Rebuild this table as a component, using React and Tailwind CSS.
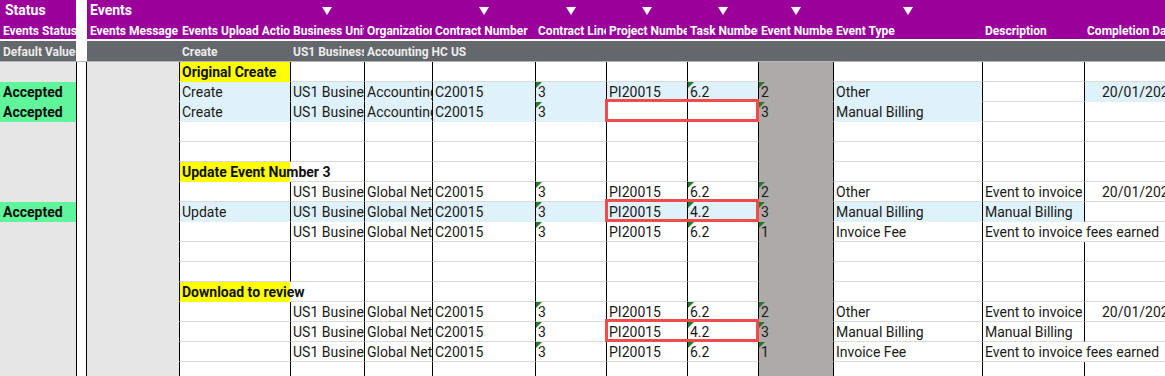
import React from 'react';

const COLS = [
  { key: 'act', w: 'w-[111px]', head: 'Events Upload Action' },
  { key: 'bu', w: 'w-[74px]', head: 'Business Unit', tri: true },
  { key: 'org', w: 'w-[68px]', head: 'Organization' },
  { key: 'cn', w: 'w-[103px]', head: 'Contract Number', tri: true },
  { key: 'cl', w: 'w-[71px]', head: 'Contract Line', tri: true, flag: true },
  { key: 'pn', w: 'w-[81px]', head: 'Project Number', tri: true },
  { key: 'tn', w: 'w-[71px]', head: 'Task Number', tri: true, flag: true },
  { key: 'en', w: 'w-[75px]', head: 'Event Number', tri: true, flag: true },
  { key: 'type', w: 'w-[149px]', head: 'Event Type', tri: true },
  { key: 'desc', w: 'w-[102px]', head: 'Description' },
  { key: 'date', w: 'w-[120px]', head: 'Completion Date' },
];

const ALL_BLUE = ['act', 'bu', 'org', 'cn', 'cl', 'pn', 'tn', 'type'];

const line = (org, extra) => ({
  bu: 'US1 Business Unit',
  org,
  cn: 'C20015',
  cl: '3',
  pn: 'PI20015',
  ...extra,
});

const ROWS = [
  { label: 'Original Create' },
  { status: true, act: 'Create', ...line('Accounting HC US', { tn: '6.2', en: '2', type: 'Other', date: '20/01/2024' }), blue: [...ALL_BLUE, 'date'] },
  { status: true, act: 'Create', ...line('Accounting HC US', { pn: '', en: '3', type: 'Manual Billing' }), blue: ['act', 'bu', 'org', 'cn', 'cl', 'type'], red: true },
  {},
  {},
  { label: 'Update Event Number 3', spill: true },
  line('Global Network', { tn: '6.2', en: '2', type: 'Other', desc: 'Event to invoice additional', date: '20/01/2024' }),
  { status: true, act: 'Update', ...line('Global Network', { tn: '4.2', en: '3', type: 'Manual Billing', desc: 'Manual Billing' }), blue: [...ALL_BLUE, 'desc'], red: true },
  line('Global Network', { tn: '6.2', en: '1', type: 'Invoice Fee', desc: 'Event to invoice fees earned', descSpill: true }),
  {},
  {},
  { label: 'Download to review', spill: true },
  line('Global Network', { tn: '6.2', en: '2', type: 'Other', desc: 'Event to invoice additional', date: '20/01/2024' }),
  { ...line('Global Network', { tn: '4.2', en: '3', type: 'Manual Billing', desc: 'Manual Billing' }), red: true },
  line('Global Network', { tn: '6.2', en: '1', type: 'Invoice Fee', desc: 'Event to invoice fees earned', descSpill: true }),
  {},
];

const Flag = () => (
  <svg className="absolute left-0 top-0" width="6" height="6" viewBox="0 0 6 6">
    <polygon points="0,0 6,0 0,6" fill="#217a2e" />
  </svg>
);

const fillFor = (row, key) => {
  if (key === 'en') return 'bg-[#aeaaaa] border-b-[#aeaaaa]';
  if (key === 'act' && row.label) return 'bg-[#ffff00] border-b-[#ffff00]';
  if (row.blue && row.blue.includes(key)) return 'bg-[#dff1fb] border-b-[#dff1fb]';
  return 'bg-white border-b-[#dadada]';
};

const DataRow = ({ row }) => (
  <div className="relative flex h-[20px]">
    <div
      className={`w-[76px] shrink-0 h-[20px] pl-[3px] pt-[1px] font-bold text-[14px] leading-[19px] text-[#111] ${
        row.status ? 'bg-[#5ff59b]' : 'bg-[#e7e6e6]'
      }`}
    >
      {row.status ? 'Accepted' : ''}
    </div>
    <div className="w-[11px] shrink-0 h-[20px] bg-white border-x border-black" />
    <div className="w-[92px] shrink-0 h-[20px] bg-[#e7e6e6]" />

    {COLS.map((c) => {
      const text = c.key === 'act' && row.label ? row.label : row[c.key];
      const spill = (c.key === 'act' && row.label) || (c.key === 'desc' && row.descSpill);
      const noLeft = (c.key === 'bu' && row.spill) || (c.key === 'date' && row.descSpill);
      return (
        <div
          key={c.key}
          className={`${c.w} shrink-0 relative h-[20px] border-l border-b whitespace-nowrap pt-[1px] text-[14px] leading-[18px] ${
            noLeft ? 'border-l-transparent' : 'border-l-black'
          } ${spill ? 'overflow-visible' : 'overflow-hidden'} ${
            c.key === 'date' ? 'pl-[17px]' : 'pl-[2px]'
          } ${fillFor(row, c.key)}`}
        >
          {c.flag && text ? <Flag /> : null}
          {text ? (
            <span className={`relative z-10 ${row.label && c.key === 'act' ? 'font-bold text-[#111]' : 'text-[#1c1a17]'}`}>
              {text}
            </span>
          ) : null}
        </div>
      );
    })}

    {row.red && (
      <div className="absolute left-[605px] top-[-3px] w-[154px] h-[23px] border-[3px] border-[#f24b4b] z-20" />
    )}
  </div>
);

const Triangle = () => (
  <svg width="10" height="8" viewBox="0 0 10 8">
    <polygon points="0,0 10,0 5,8" fill="#ffffff" />
  </svg>
);

export default function App() {
  return (
    <div className="w-[1165px] h-[376px] overflow-hidden bg-white font-['Roboto',sans-serif]">
      {/* Title band */}
      <div className="flex h-[20px]">
        <div className="w-[76px] shrink-0 bg-[#9b009b] pl-[5px] pt-[1px] text-[14px] leading-[19px] font-bold text-white">
          Status
        </div>
        <div className="w-[11px] shrink-0 bg-white" />
        <div className="flex flex-1 bg-[#9b009b]">
          <div className="w-[92px] shrink-0 pl-[3px] pt-[1px] text-[14px] leading-[19px] font-bold text-white">Events</div>
          {COLS.map((c) => (
            <div key={c.key} className={`${c.w} shrink-0 flex justify-center pt-[7px]`}>
              {c.tri ? <Triangle /> : null}
            </div>
          ))}
        </div>
      </div>

      {/* Column names */}
      <div className="flex h-[19px]">
        <div className="w-[76px] shrink-0 overflow-hidden whitespace-nowrap bg-[#9b009b] pl-[3px] pt-[4px] text-[12px] leading-[15px] font-bold text-white">
          Events Status
        </div>
        <div className="w-[11px] shrink-0 bg-white" />
        <div className="flex flex-1 bg-[#9b009b] text-[12px] font-bold text-white">
          <div className="w-[92px] shrink-0 overflow-hidden whitespace-nowrap pl-[3px] pt-[4px] leading-[15px]">
            Events Message
          </div>
          {COLS.map((c) => (
            <div
              key={c.key}
              className={`${c.w} shrink-0 overflow-hidden whitespace-nowrap border-l border-l-transparent pl-[2px] pt-[4px] leading-[15px]`}
            >
              {c.head}
            </div>
          ))}
        </div>
      </div>

      <div className="h-[2px] bg-white" />

      {/* Default values */}
      <div className="flex h-[21px] border-b border-b-[#b4b5b7] text-[12px] font-bold text-[#ececec]">
        <div className="w-[76px] shrink-0 overflow-hidden whitespace-nowrap bg-[#64676b] pl-[3px] pt-[3px] leading-[17px]">
          Default Values
        </div>
        <div className="w-[11px] shrink-0 bg-white" />
        <div className="flex flex-1 bg-[#64676b]">
          <div className="w-[92px] shrink-0" />
          <div className="w-[111px] shrink-0 border-l border-l-transparent pl-[2px] pt-[3px] leading-[17px]">Create</div>
          <div className="w-[74px] shrink-0 overflow-hidden whitespace-nowrap border-l border-l-transparent pl-[2px] pt-[3px] leading-[17px]">
            US1 Business Unit
          </div>
          <div className="w-[68px] shrink-0 whitespace-nowrap border-l border-l-transparent pl-[2px] pt-[3px] leading-[17px]">
            Accounting HC US
          </div>
        </div>
      </div>

      {ROWS.map((row, i) => (
        <DataRow key={i} row={row} />
      ))}
    </div>
  );
}
